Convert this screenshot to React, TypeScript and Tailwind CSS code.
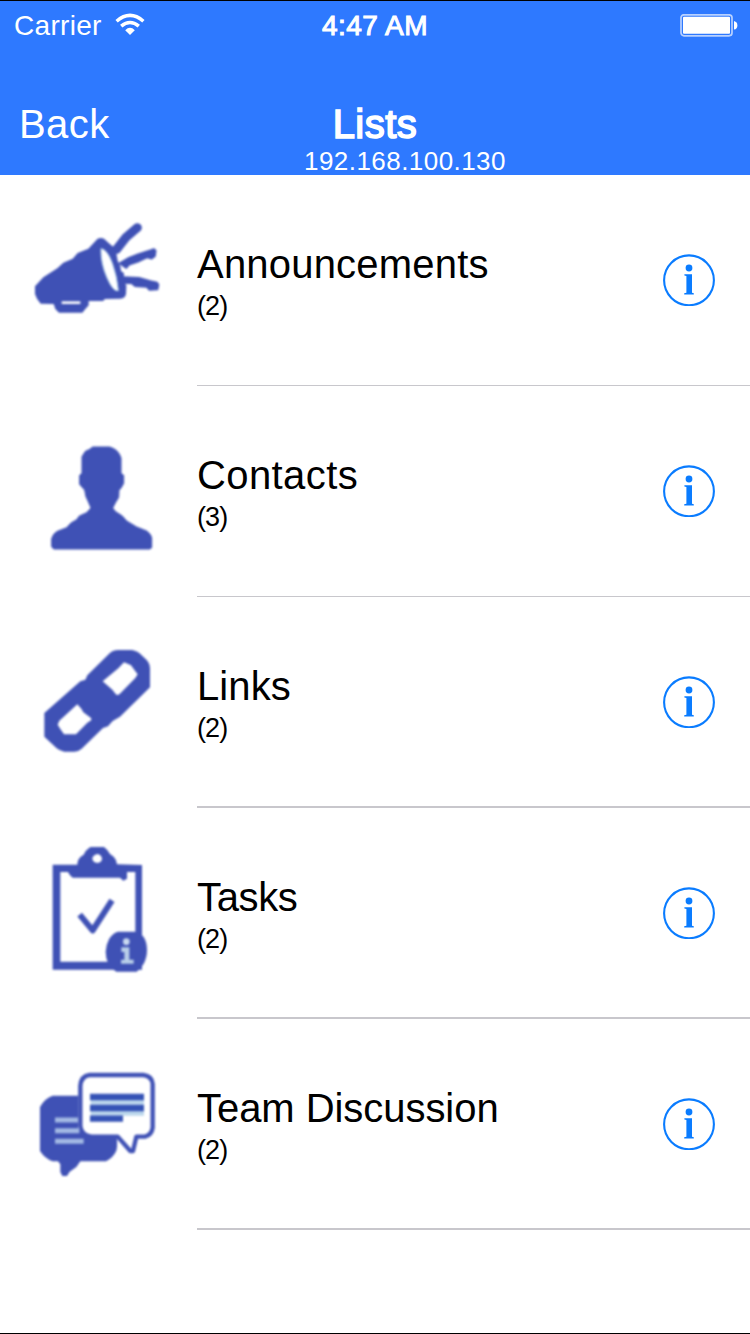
import type { ReactNode } from "react";

type ListEntry = {
  name: string;
  count: number;
  tracking: string;
  icon: ReactNode;
};

const INK = "#3f51b5";

function MegaphoneIcon() {
  return (
    <g transform="translate(-30 15)">
      <path
        fill={INK}
        d="M45 229 L70 202 L84 193 L112 175 L130 158 L158 146 L173 129 L205 116 L232 87 Q241 82 252 86 L266 99 L281 112 L289 130 L293 152 L301 168 L303 183 L312 190 L311 217 L319 226 L318 252 Q315 266 301 266 L255 267 L249 273 L206 273 L206 286 L196 297 L187 308 L117 308 L106 297 L101 282 L62 281 L51 266 L45 252 Z"
      />
      <path stroke={INK} strokeWidth="27" strokeLinecap="round" strokeLinejoin="round" fill="none" d="M290 118 L317 83 L352 53" />
      <path
        fill={INK}
        stroke={INK}
        strokeWidth="5"
        strokeLinejoin="round"
        d="M299 160 L327 143 L354 133 L391 121 L402 117 L407 122 L405 138 L395 146 L382 142 L354 155 L327 164 L319 174 Z"
      />
      <path
        fill={INK}
        stroke={INK}
        strokeWidth="4"
        strokeLinejoin="round"
        d="M305 201 L357 203 L391 213 L411 217 L416 224 L413 239 L388 240 L380 231 L345 229 L334 220 L305 219 Z"
      />
      <path fill="#fff" stroke="#b9d8ee" strokeWidth="3" d="M243 116 Q261 117 277 160 Q291 199 295 242 Q280 247 261 203 Q242 160 243 116 Z" />
      <path stroke="#fff" strokeWidth="8" d="M125 278 H181" />
    </g>
  );
}

function PersonIcon() {
  return (
    <g transform="translate(0 42)">
      <path
        fill={INK}
        stroke={INK}
        strokeWidth="3"
        strokeLinejoin="round"
        d="M188 51 H239 Q252 55 260 62 Q270 72 273 84 V130 L281 136 V160 L273 174 L267 181 L266 202 L257 217 L248 234 L257 245 L277 258 L290 273 L320 291 L350 303 Q364 313 365 324 V353 L359 357 H71 L65 350 V326 Q69 311 82 304 L110 293 L123 279 L140 269 L148 258 L170 248 L183 234 L174 213 L168 200 L164 180 L149 163 V136 L156 130 V80 L166 64 L179 58 Z"
      />
    </g>
  );
}

function ChainIcon() {
  return (
    <g transform="translate(0 39)">
      <path
        fill={INK}
        fillRule="evenodd"
        d="M43 219 L151 124 L166 119 L172 106 L239 40 Q250 30 264 30 H306 Q323 33 335 46 L350 60 Q360 71 360 86 V142 L270 230 L248 243 L234 259 L219 264 L155 326 Q145 335 133 335 H103 Q90 333 80 325 L43 290 Z M218 124 L265 85 L282 67 L293 71 L303 76 L315 92 L323 103 L316 114 L272 159 Q263 169 257 162 L247 149 Z M142 193 L154 206 L160 217 L182 233 Q187 239 180 243 L172 248 L138 283 H102 L93 270 L83 254 L88 242 Z"
      />
    </g>
  );
}

function ClipboardIcon() {
  return (
    <g transform="translate(30 -9)">
      <path
        fill={INK}
        fillRule="evenodd"
        d="M38 89 H112 Q112 74 122 65 L131 59 Q137 45 148 38 L152 36 H192 Q204 45 210 57 L221 65 Q230 74 231 88 L306 90 V404 H38 Z M61 111 V380 H286 V111 H261 V131 L250 137 L240 128 H98 Q88 121 84 111 Z M172 57 Q158 60 157 71 Q159 82 172 84 Q185 82 186 71 Q184 59 172 57 Z"
      />
      <path stroke={INK} strokeWidth="18" strokeLinejoin="round" fill="none" d="M119 239 L158 286 L216 196" />
      <path fill={INK} d="M234 290 H284 Q302 294 311 306 Q321 322 321 345 Q321 368 311 386 Q303 401 290 410 H229 Q213 401 205 386 Q197 370 197 350 Q198 330 207 313 Q217 295 234 290 Z" />
      <circle cx="259" cy="320" r="10" fill="#c9d9f0" />
      <path fill="#b9cfe9" d="M244 337 H268 V374 H281 V386 H243 V374 H253 V351 H244 Z" />
    </g>
  );
}

function ChatIcon() {
  return (
    <g transform="translate(0 33)">
      <path
        fill={INK}
        d="M68 107 H144 V203 L170 224 H257 Q265 246 259 272 Q250 292 228 304 H151 L139 321 L119 335 L111 348 H97 L91 336 V313 L84 304 H68 Q45 296 30 273 V141 Q44 115 68 107 Z"
      />
      <path
        fill="#fff"
        stroke={INK}
        strokeWidth="13"
        strokeLinejoin="round"
        d="M179 45 H340 Q366 48 368 72 V203 Q365 225 345 230 H319 L309 273 H301 L263 230 H184 Q154 226 151 199 V78 Q153 48 179 45 Z"
      />
      <path stroke="#bcd7ec" strokeWidth="14" d="M182 127 H342 M182 160 H342" />
      <path stroke="#3553b6" strokeWidth="19" d="M180 111 H342 M180 144 H342 M180 176 H279" />
      <path stroke="#a3b9e4" strokeWidth="15" d="M75 180 H144 M75 212 H148 M75 244 H161" />
    </g>
  );
}

const entries: ListEntry[] = [
  { name: "Announcements", count: 2, tracking: "tracking-[0.2px]", icon: <MegaphoneIcon /> },
  { name: "Contacts", count: 3, tracking: "tracking-[0.4px]", icon: <PersonIcon /> },
  { name: "Links", count: 2, tracking: "tracking-[0.1px]", icon: <ChainIcon /> },
  { name: "Tasks", count: 2, tracking: "tracking-[-0.35px]", icon: <ClipboardIcon /> },
  { name: "Team Discussion", count: 2, tracking: "tracking-[-0.05px]", icon: <ChatIcon /> },
];

function WifiIcon() {
  return (
    <svg className="h-[22px] w-[30px]" viewBox="0 0 30 22" fill="none" stroke="#fff" aria-hidden="true">
      <path strokeWidth="3.5" d="M1.6 8.2 Q15 -3.4 28.4 8.2" />
      <path strokeWidth="3.5" d="M6.2 13.2 Q15 5.8 23.8 13.2" />
      <path fill="#fff" stroke="none" d="M10.2 17.2 Q15 12.4 19.8 17.2 L15 22 Z" />
    </svg>
  );
}

function BatteryIcon() {
  return (
    <svg className="h-[24px] w-[59px]" viewBox="0 0 59 24" aria-hidden="true">
      <rect x="2" y="0.8" width="51" height="21" rx="3" fill="none" stroke="#b8d1ff" strokeWidth="1.7" />
      <rect x="4" y="2.8" width="47" height="17" rx="1" fill="#fff" />
      <path fill="#fff" d="M55 7 Q58.4 8 58.4 11.4 Q58.4 14.8 55 15.6 Z" />
    </svg>
  );
}

function InfoButton({ label }: { label: string }) {
  return (
    <button type="button" aria-label={label} className="size-[52px]">
      <svg className="size-full" viewBox="0 0 52 52">
        <circle cx="26" cy="26.3" r="24.9" fill="none" stroke="#0a7cff" strokeWidth="2.1" />
        <circle cx="26" cy="14" r="3.4" fill="#0a7cff" />
        <path fill="#0a7cff" d="M21.4 20.2 H29 V38.8 L30.8 39.2 V40.4 H21.2 V39.2 L23.4 38.8 V22 L21.4 21.5 Z" />
      </svg>
    </button>
  );
}

function ListRow({ entry, thick }: { entry: ListEntry; thick: boolean }) {
  return (
    <li className="flex h-[211px]">
      <div className="w-[197px] pt-[30px] pl-[30px]">
        <svg className="h-[150px] w-[140px] blur-[0.8px]" viewBox="0 0 420 450" aria-hidden="true">
          {entry.icon}
        </svg>
      </div>
      <div className={`flex flex-1 justify-between border-[#c8c7cc] pr-[35px] ${thick ? "border-b-2" : "border-b"}`}>
        <div className="pt-[69px] text-black">
          <div className={`text-[40px] leading-[40px] ${entry.tracking}`}>{entry.name}</div>
          <div className="mt-[8px] text-[27px] leading-[28px] tracking-[-0.9px]">({entry.count})</div>
        </div>
        <div className="pt-[79px]">
          <InfoButton label={`About ${entry.name}`} />
        </div>
      </div>
    </li>
  );
}

export default function App() {
  return (
    <div className="flex h-[1334px] w-[750px] flex-col overflow-hidden border-y border-black bg-white font-['Liberation_Sans',Arial,sans-serif]">
      <header className="h-[174px] bg-[#2e79ff] text-white">
        <div className="grid h-[49px] grid-cols-3 pt-[9px] text-[28px] leading-[32px]">
          <div className="flex gap-[13px] pl-[14px]">
            <span className="tracking-[0.3px]">Carrier</span>
            <span className="pt-[3px]">
              <WifiIcon />
            </span>
          </div>
          <div className="text-center tracking-[0.5px] [-webkit-text-stroke:1px_white]">4:47 AM</div>
          <div className="flex justify-end pt-[4px] pr-[12px]">
            <BatteryIcon />
          </div>
        </div>
        <div className="grid grid-cols-3 pt-[54px] text-[40px] leading-[40px]">
          <div className="pl-[19px] tracking-[0.4px]">Back</div>
          <div className="text-center tracking-[0.5px] [-webkit-text-stroke:1.6px_white]">Lists</div>
        </div>
        <div className="mt-[4px] pl-[304px] text-[26px] leading-[26px] tracking-[0.45px]">192.168.100.130</div>
      </header>

      <ul>
        {entries.map((entry, i) => (
          <ListRow key={entry.name} entry={entry} thick={i > 1} />
        ))}
      </ul>
    </div>
  );
}
